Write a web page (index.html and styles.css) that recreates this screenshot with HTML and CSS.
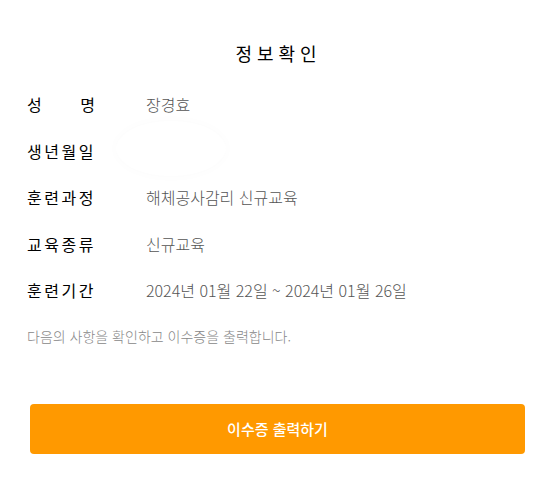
FILE: index.html
```html
<!DOCTYPE html>
<html lang="ko">
<head>
<meta charset="utf-8">
<link rel="stylesheet" href="styles.css">
</head>
<body>
<div class="page">
  <h1 class="title">정보확인</h1>
  <dl class="info">
    <div class="row"><dt class="label label-just"><span>성</span><span>명</span></dt><dd class="value">장경효</dd></div>
    <div class="row"><dt class="label">생년월일</dt><dd class="value"><span class="blur"></span></dd></div>
    <div class="row"><dt class="label">훈련과정</dt><dd class="value">해체공사감리 신규교육</dd></div>
    <div class="row"><dt class="label">교육종류</dt><dd class="value">신규교육</dd></div>
    <div class="row"><dt class="label">훈련기간</dt><dd class="value">2024년 01월 22일 ~ 2024년 01월 26일</dd></div>
  </dl>
  <p class="note">다음의 사항을 확인하고 이수증을 출력합니다.</p>
  <button class="btn">이수증 출력하기</button>
</div>
</body>
</html>
```
FILE: styles.css
```css
html, body {
  margin: 0;
  padding: 0;
  background: #fff;
}
body {
  font-family: "Noto Sans CJK KR", "Noto Sans", sans-serif;
  color: #111;
}
.page {
  width: 555px;
  padding: 38px 30px 0 27px;
  box-sizing: border-box;
}
.title {
  margin: 0;
  text-align: center;
  font-size: 18px;
  font-weight: 400;
  letter-spacing: 5px;
  line-height: 30px;
  padding-left: 5px;
  color: #000;
}
.info {
  margin: 13px 0 0 0;
  padding: 0;
}
.row {
  display: flex;
  align-items: center;
  height: 46.5px;
}
.label {
  width: 119px;
  flex: none;
  font-size: 16px;
  font-weight: 400;
  letter-spacing: 2.5px;
  color: #000;
}
.label-just {
  display: flex;
  justify-content: space-between;
  width: 68px;
  margin-right: 51px;
  letter-spacing: 0;
}
.value {
  margin: 0;
  font-size: 16px;
  font-weight: 300;
  color: #555;
  position: relative;
}
.blur {
  position: absolute;
  left: -30px;
  top: -30px;
  width: 110px;
  height: 55px;
  border-radius: 50%;
  background: #fff;
  box-shadow: 0 0 12px rgba(0,0,0,0.02);
}
.note {
  margin: 12px 0 0 0;
  font-size: 14px;
  font-weight: 300;
  color: #888;
  line-height: 20px;
}
.btn {
  display: block;
  margin: 58px 0 0 3px;
  width: 495px;
  height: 50px;
  border: 0;
  border-radius: 4px;
  background: #ff9900;
  color: #fff;
  font-family: "Noto Sans CJK KR", sans-serif;
  font-size: 15px;
  font-weight: 500;
}
```
